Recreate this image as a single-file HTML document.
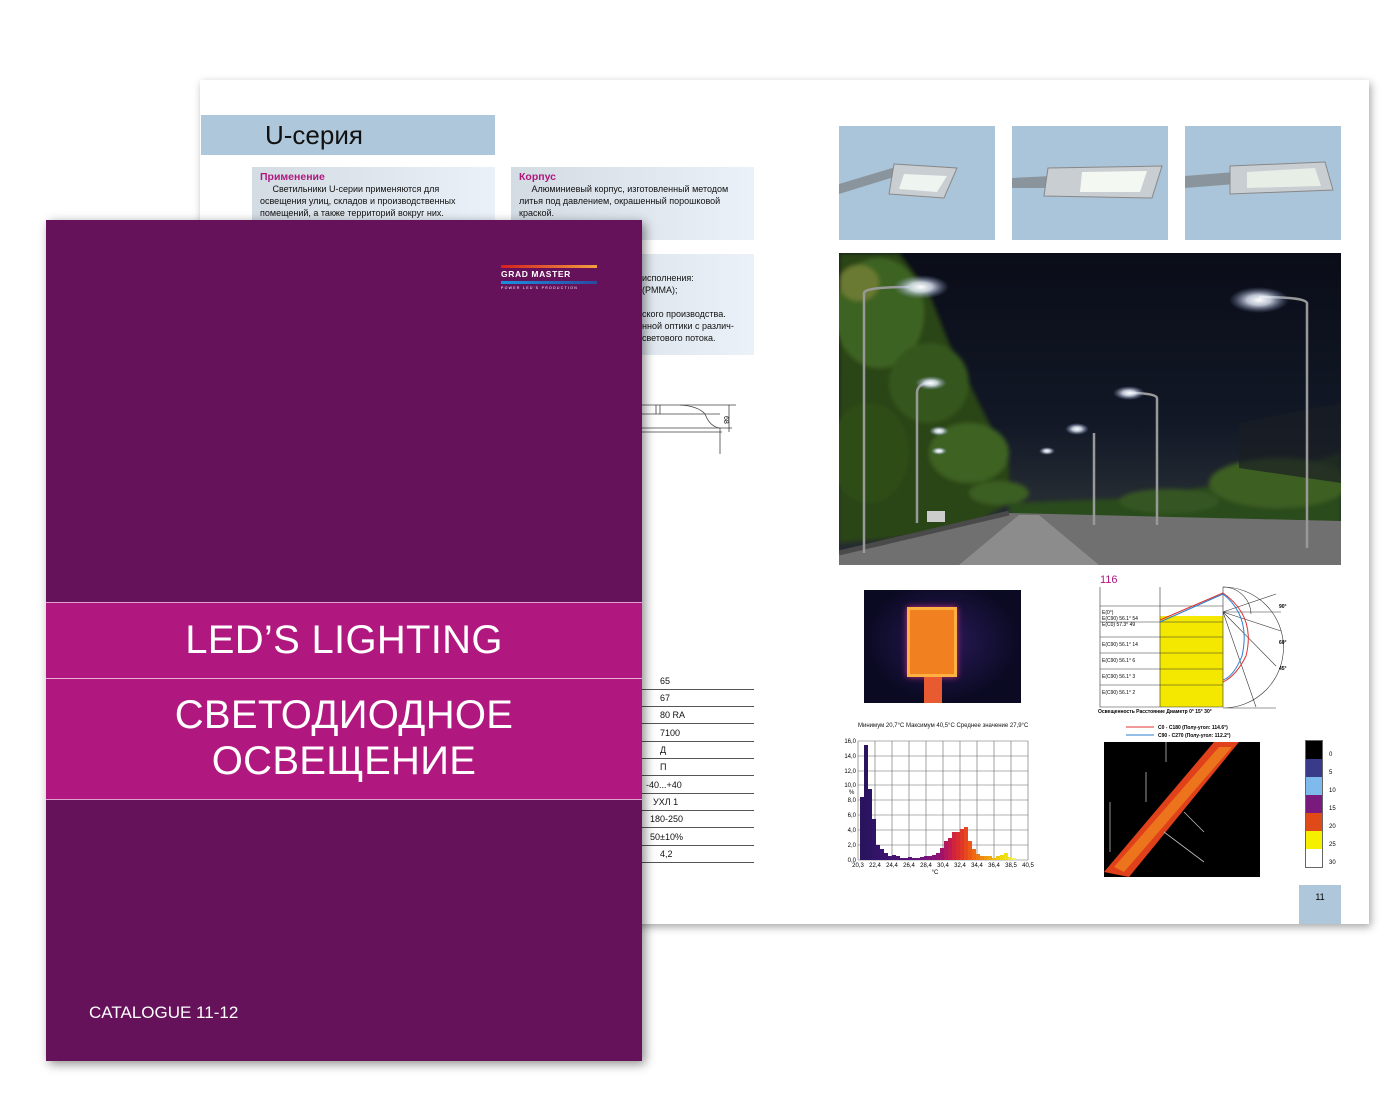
<!DOCTYPE html>
<html><head><meta charset="utf-8"><style>
*{margin:0;padding:0;box-sizing:border-box}
body{width:1400px;height:1100px;background:#fff;position:relative;overflow:hidden;font-family:"Liberation Sans",sans-serif}
.a{position:absolute}
.page{left:200px;top:80px;width:1169px;height:844px;background:#fff;box-shadow:2px 3px 8px rgba(0,0,0,.35)}
.box{background:linear-gradient(90deg,#d3dbe3,#eaf1f8);font-size:9px;line-height:12px;color:#111}
.box b{color:#b0177e;font-size:10.5px;display:block}
.ph{background:#aac4d9}
.cover{left:46px;top:220px;width:596px;height:841px;background:#65125a;box-shadow:3px 3px 10px rgba(0,0,0,.45)}
.row{left:642px;width:112px;height:17.2px;border-bottom:1px solid #555;font-size:9px;line-height:16px;padding-left:18px;color:#111}
</style></head><body>
<div class="a page"></div>
<div class="a" style="left:201px;top:115px;width:294px;height:40px;background:#aec7da;font-size:26px;line-height:40px;padding-left:64px;color:#111">U-серия</div>
<div class="a box" style="left:252px;top:167px;width:243px;height:62px;padding:4px 8px"><b>Применение</b>&nbsp;&nbsp;&nbsp;&nbsp;&nbsp;Светильники U-серии применяются для освещения улиц, складов и производственных помещений, а также территорий вокруг них.</div>
<div class="a box" style="left:511px;top:167px;width:243px;height:73px;padding:4px 8px"><b>Корпус</b>&nbsp;&nbsp;&nbsp;&nbsp;&nbsp;Алюминиевый корпус, изготовленный методом литья под давлением, окрашенный порошковой краской.</div>
<div class="a box" style="left:511px;top:254px;width:243px;height:101px;padding:18px 0 0 131px">исполнения:<br>(PMMA);<br><br>ского производства.<br>нной оптики с различ-<br>светового потока.</div>
<svg class="a" style="left:640px;top:400px" width="100" height="80"><g fill="none" stroke="#444" stroke-width=".8"><path d="M2 5H96M2 14H80M2 28H92M2 32H82"/><path d="M40 5Q58 6 65 14Q70 27 80 28V54M16 5V14M20 5V14M89 5V32"/></g><text x="86" y="22" font-size="7" transform="rotate(90 88 18)">68</text></svg>
<div class="a row" style="top:673px">65</div>
<div class="a row" style="top:690px">67</div>
<div class="a row" style="top:707px">80 RA</div>
<div class="a row" style="top:725px">7100</div>
<div class="a row" style="top:742px">Д</div>
<div class="a row" style="top:759px">П</div>
<div class="a row" style="top:777px;padding-left:4px">-40...+40</div>
<div class="a row" style="top:794px;padding-left:11px">УХЛ 1</div>
<div class="a row" style="top:811px;padding-left:8px">180-250</div>
<div class="a row" style="top:829px;padding-left:8px">50±10%</div>
<div class="a row" style="top:846px">4,2</div>
<div class="a ph" style="left:839px;top:126px;width:156px;height:114px"><svg width="156" height="114"><path d="M0 58L60 40L65 48L0 68Z" fill="#8a949c"/><path d="M55 38L118 42L105 72L50 68Z" fill="#c9ced2" stroke="#888"/><path d="M65 48L108 50L98 66L60 63Z" fill="#eef4f0"/></svg></div>
<div class="a ph" style="left:1012px;top:126px;width:156px;height:114px"><svg width="156" height="114"><path d="M0 52L40 50L40 62L0 62Z" fill="#8a949c"/><path d="M36 42L150 40L140 72L32 70Z" fill="#c9ced2" stroke="#888"/><path d="M70 46L135 45L128 66L68 66Z" fill="#f4f8f2"/></svg></div>
<div class="a ph" style="left:1185px;top:126px;width:156px;height:114px"><svg width="156" height="114"><path d="M0 50L50 46L50 58L0 62Z" fill="#8a949c"/><path d="M45 40L140 36L148 64L45 68Z" fill="#c9ced2" stroke="#888"/><path d="M62 46L130 42L136 60L62 62Z" fill="#e6eee6"/></svg></div>
<div class="a" style="left:839px;top:253px;width:502px;height:312px;overflow:hidden;background:linear-gradient(180deg,#0a0d18 0%,#121826 55%,#252b32 78%)">
<svg width="502" height="312"><defs><radialGradient id="g"><stop offset="0" stop-color="#fff"/><stop offset=".4" stop-color="#e8f0ff" stop-opacity=".8"/><stop offset="1" stop-color="#8090c0" stop-opacity="0"/></radialGradient>
<filter id="b"><feGaussianBlur stdDeviation="2"/></filter></defs>
<g filter="url(#b)">
<path d="M0 0H60L90 40L110 90L140 150L170 210L170 250L120 280L0 290Z" fill="#2a4418"/>
<ellipse cx="40" cy="60" rx="45" ry="55" fill="#3e6320"/><ellipse cx="90" cy="130" rx="40" ry="40" fill="#34561c"/><ellipse cx="130" cy="200" rx="40" ry="30" fill="#3c6222"/><ellipse cx="30" cy="200" rx="40" ry="50" fill="#2e4e18"/>
<ellipse cx="20" cy="30" rx="20" ry="18" fill="#6a7a30"/><ellipse cx="160" cy="240" rx="30" ry="12" fill="#3a5e22"/>
<path d="M170 250L300 245L420 225L502 200V280L170 275Z" fill="#2c4c1c"/>
<ellipse cx="440" cy="230" rx="70" ry="25" fill="#3c5e24"/><ellipse cx="330" cy="248" rx="50" ry="12" fill="#355622"/></g>
<path d="M400 170L502 150V230L400 215Z" fill="#1a1e24" opacity=".7"/>
<path d="M0 300L170 260L502 268V312H0Z" fill="#707070"/>
<path d="M120 312L180 262L200 262L260 312Z" fill="#8c8c8c"/>
<path d="M0 300L170 260" stroke="#4a4a4a" stroke-width="5"/>
<g stroke="#999" stroke-width="2.5" fill="none"><path d="M25 300V40Q26 34 70 34"/><path d="M468 295V50Q466 44 420 44"/><path d="M78 270V140Q78 130 92 130"/><path d="M318 272V145Q317 140 290 140"/><path d="M255 272V180"/></g>
<g fill="url(#g)"><ellipse cx="82" cy="34" rx="28" ry="12"/><ellipse cx="420" cy="47" rx="30" ry="13"/><ellipse cx="92" cy="130" rx="16" ry="7"/><ellipse cx="290" cy="140" rx="16" ry="7"/><ellipse cx="238" cy="176" rx="12" ry="6"/><ellipse cx="100" cy="178" rx="10" ry="5"/><ellipse cx="208" cy="198" rx="8" ry="4"/><ellipse cx="100" cy="198" rx="8" ry="4"/></g>
<rect x="88" y="258" width="18" height="11" fill="#ccc"/></svg></div>
<div class="a" style="left:864px;top:590px;width:157px;height:113px;background:radial-gradient(ellipse at 50% 45%,#2a1a5a,#0a0a22 70%)">
<div class="a" style="left:43px;top:17px;width:50px;height:70px;background:#f08020;border:3px solid #ffb040;box-shadow:0 0 6px #c03080"></div>
<div class="a" style="left:60px;top:87px;width:18px;height:26px;background:#e85a30"></div></div>
<div class="a" style="left:858px;top:723px;font-size:6px;color:#111;white-space:nowrap">Минимум 20,7°C Максимум 40,5°C Среднее значение 27,9°C</div>
<svg class="a" style="left:840px;top:735px" width="200" height="145" font-size="6" font-family="Liberation Sans">
<g stroke="#666" stroke-width=".6"><path d="M18 6V125M35 6V125M52 6V125M69 6V125M86 6V125M103 6V125M120 6V125M137 6V125M154 6V125M171 6V125M188 6V125"/><path d="M18 6H188M18 21H188M18 36H188M18 50H188M18 65H188M18 80H188M18 95H188M18 110H188M18 125H188"/></g>
<g>
<rect x="20" y="62" width="4" height="63" fill="#2a1460"/><rect x="24" y="10" width="4" height="115" fill="#2a1460"/><rect x="28" y="54" width="4" height="71" fill="#2c1462"/><rect x="32" y="84" width="4" height="41" fill="#301466"/><rect x="36" y="110" width="4" height="15" fill="#341468"/><rect x="40" y="114" width="4" height="11" fill="#38146c"/><rect x="44" y="118" width="4" height="7" fill="#3c1470"/><rect x="48" y="121" width="4" height="4" fill="#401470"/><rect x="52" y="120" width="4" height="5" fill="#441472"/><rect x="56" y="121" width="4" height="4" fill="#481474"/><rect x="60" y="123" width="4" height="2" fill="#4c1476"/><rect x="64" y="123" width="4" height="2" fill="#521478"/><rect x="68" y="122" width="4" height="3" fill="#58147a"/><rect x="72" y="123" width="4" height="2" fill="#5e147c"/><rect x="76" y="123" width="4" height="2" fill="#64147c"/><rect x="80" y="122" width="4" height="3" fill="#6c147c"/><rect x="84" y="121" width="4" height="4" fill="#74147c"/><rect x="88" y="121" width="4" height="4" fill="#7c147a"/><rect x="92" y="120" width="4" height="5" fill="#841478"/><rect x="96" y="118" width="4" height="7" fill="#8c1474"/><rect x="100" y="113" width="4" height="12" fill="#a01468"/><rect x="104" y="106" width="4" height="19" fill="#b01860"/><rect x="108" y="103" width="4" height="22" fill="#c01c50"/><rect x="112" y="97" width="4" height="28" fill="#d02440"/><rect x="116" y="97" width="4" height="28" fill="#d82c30"/><rect x="120" y="94" width="4" height="31" fill="#e03828"/><rect x="124" y="92" width="4" height="33" fill="#e84820"/><rect x="128" y="106" width="4" height="19" fill="#ec5818"/><rect x="132" y="114" width="4" height="11" fill="#f06814"/><rect x="136" y="119" width="4" height="6" fill="#f07812"/><rect x="140" y="121" width="4" height="4" fill="#f08810"/><rect x="144" y="121" width="4" height="4" fill="#f09810"/><rect x="148" y="121" width="4" height="4" fill="#f0a810"/><rect x="152" y="123" width="4" height="2" fill="#f0b810"/><rect x="156" y="121" width="4" height="4" fill="#f0c810"/><rect x="160" y="120" width="4" height="5" fill="#f0d810"/><rect x="164" y="118" width="4" height="7" fill="#f0e010"/><rect x="168" y="122" width="4" height="3" fill="#f0e840"/><rect x="172" y="123" width="4" height="2" fill="#f0f060"/></g>
<g text-anchor="end"><text x="16" y="8">16,0</text><text x="16" y="23">14,0</text><text x="16" y="38">12,0</text><text x="16" y="52">10,0</text><text x="16" y="67">8,0</text><text x="16" y="82">6,0</text><text x="16" y="97">4,0</text><text x="16" y="112">2,0</text><text x="16" y="127">0,0</text></g>
<text x="9" y="59">%</text>
<g text-anchor="middle"><text x="18" y="132">20,3</text><text x="35" y="132">22,4</text><text x="52" y="132">24,4</text><text x="69" y="132">26,4</text><text x="86" y="132">28,4</text><text x="103" y="132">30,4</text><text x="120" y="132">32,4</text><text x="137" y="132">34,4</text><text x="154" y="132">36,4</text><text x="171" y="132">38,5</text><text x="188" y="132">40,5</text><text x="95" y="139">°C</text></g></svg>
<div class="a" style="left:1100px;top:574px;font-size:11px;color:#b0177e">116</div>
<svg class="a" style="left:1096px;top:586px" width="200" height="156" font-size="5" font-family="Liberation Sans" font-weight="bold">
<rect x="64" y="30" width="63" height="91" fill="#f5e800"/>
<path d="M64 30L127 2V30Z" fill="#fff"/>
<g stroke="#333" stroke-width=".6" fill="none"><path d="M4 1V121H127V1M64 1V121M4 20H127M4 36H127M4 51H127M4 67H127M4 83H127M4 99H127"/><path d="M127 122H180M127 1A58 58 0 0 1 127 122"/><path d="M127 1A28 28 0 0 1 155 28"/><path d="M127 26L180 8M127 26L185 45M127 26L180 80M127 26L160 121M127 26L185 26"/></g>
<path d="M64 34L127 7Q160 30 150 70Q140 90 127 96" stroke="#e03030" fill="none"/>
<path d="M64 36L127 8Q155 30 146 70Q138 90 127 94" stroke="#2a7fd0" fill="none"/>
<g font-weight="normal"><text x="6" y="28">E(0°)</text><text x="6" y="34">E(C90)   56.1°   54</text><text x="6" y="40">E(C0)    57.3°   49</text><text x="6" y="60">E(C90)   56.1°   14</text><text x="6" y="76">E(C90)   56.1°    6</text><text x="6" y="92">E(C90)   56.1°    3</text><text x="6" y="108">E(C90)   56.1°    2</text></g>
<text x="112" y="-1">180°</text><text x="150" y="-1">120°</text><text x="183" y="22">90°</text><text x="183" y="58">60°</text><text x="183" y="84">45°</text><text x="2" y="127">Освещенность Расстояние  Диаметр  0°     15°      30°</text>
<text x="62" y="143">C0 - C180 (Полу-угол: 114.6°)</text><text x="62" y="151">C90 - C270 (Полу-угол: 112.2°)</text>
<path d="M30 141H58" stroke="#e03030"/><path d="M30 149H58" stroke="#2a7fd0"/>
</svg>
<div class="a" style="left:1104px;top:742px;width:156px;height:135px;background:#000;overflow:hidden"><svg width="156" height="135"><path d="M0 130L110 0H135L25 135Z" fill="#e0401a"/><path d="M10 125L115 5H128L20 130Z" fill="#f08a20" opacity=".7"/><path d="M80 70l20 20M60 90l40 30M62 0V20M42 30V60M6 60V110" stroke="#bbb" stroke-width=".8"/></svg></div>
<div class="a" style="left:1305px;top:740px;width:18px;border:1px solid #666">
<div style="height:18px;background:#000"></div><div style="height:18px;background:#3a3a8a"></div><div style="height:18px;background:#7ebbec"></div><div style="height:18px;background:#7a1a7e"></div><div style="height:18px;background:#e04a18"></div><div style="height:18px;background:#f5ef00"></div><div style="height:18px;background:#fff"></div></div>
<div class="a" style="left:1329px;top:746px;font-size:6px;line-height:18px">0<br>5<br>10<br>15<br>20<br>25<br>30</div>
<div class="a" style="left:1299px;top:885px;width:42px;height:39px;background:#aec7da;font-size:9px;text-align:center;padding-top:7px">11</div>
<div class="a cover"></div>
<div class="a" style="left:501px;top:265px;width:96px;height:3px;background:linear-gradient(90deg,#d42020,#f0a040)"></div>
<div class="a" style="left:501px;top:269px;font-size:8.5px;font-weight:bold;color:#fff;letter-spacing:.6px">GRAD MASTER</div>
<div class="a" style="left:501px;top:281px;width:96px;height:3px;background:linear-gradient(90deg,#1a90e0,#2a4aa0)"></div>
<div class="a" style="left:501px;top:286px;font-size:3.5px;color:#fff;letter-spacing:1.3px">POWER LED'S PRODUCTION</div>
<div class="a" style="left:46px;top:602px;width:596px;height:198px;background:#b1187f;border-top:1px solid #e0a0d0;border-bottom:1px solid #e0a0d0"></div>
<div class="a" style="left:46px;top:678px;width:596px;height:1px;background:#e8b0d8"></div>
<div class="a" style="left:46px;top:618px;width:596px;text-align:center;color:#fff;font-size:40px;letter-spacing:.3px">LED’S LIGHTING</div>
<div class="a" style="left:46px;top:692px;width:596px;text-align:center;color:#fff;font-size:40px;line-height:46px;letter-spacing:.3px">СВЕТОДИОДНОЕ<br>ОСВЕЩЕНИЕ</div>
<div class="a" style="left:89px;top:1003px;color:#fff;font-size:17px">CATALOGUE 11-12</div>
</body></html>
